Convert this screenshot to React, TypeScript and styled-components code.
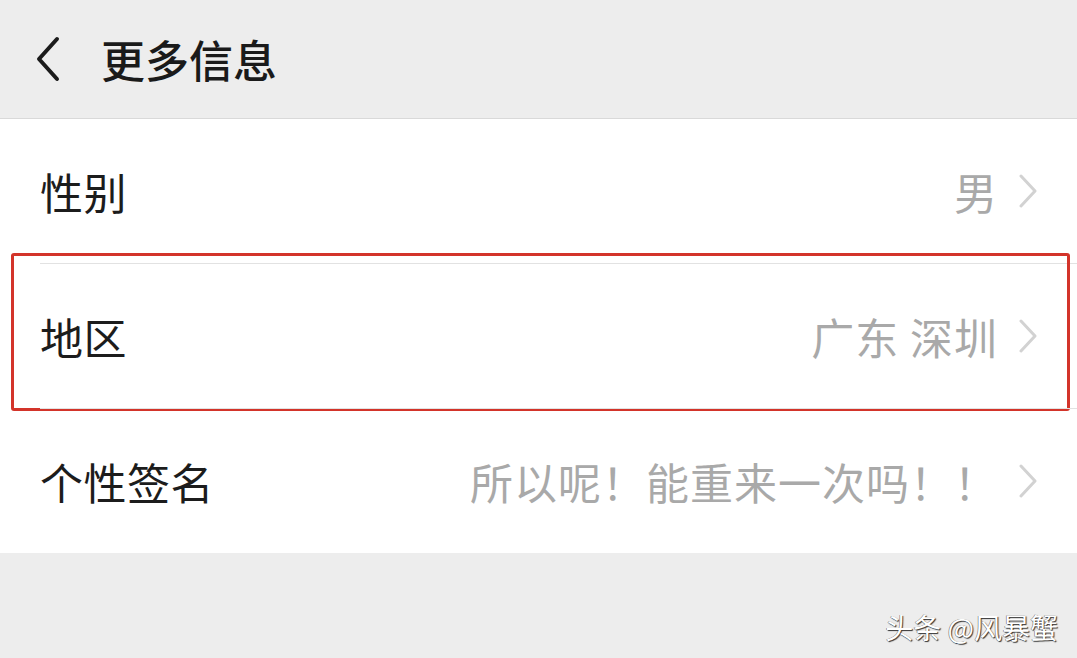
import React from "react";
import styled, { createGlobalStyle } from "styled-components";

interface InfoItem {
    label: string;
    value: string;
    marked?: boolean;
}

const items: InfoItem[] = [
    { label: "性别", value: "男" },
    { label: "地区", value: "广东 深圳", marked: true },
    { label: "个性签名", value: "所以呢！能重来一次吗！！" },
];

const App: React.FC = () => {
    return (
        <>
            <GlobalStyle />
            <Page>
                <Header>
                    <BackButton aria-label="返回">
                        <svg width="26" height="46" viewBox="0 0 26 46">
                            <path
                                d="M22 3 L4 23 L22 43"
                                fill="none"
                                stroke="#1b1b1b"
                                strokeWidth="4"
                                strokeLinecap="round"
                                strokeLinejoin="round"
                            />
                        </svg>
                    </BackButton>
                    <Title>更多信息</Title>
                </Header>
                <List>
                    {items.map((item, i) => (
                        <Row key={item.label}>
                            <RowInner first={i === 0}>
                                <Label>{item.label}</Label>
                                <Value>{item.value}</Value>
                                <Chevron width="18" height="34" viewBox="0 0 18 34">
                                    <path
                                        d="M2 2 L16 17 L2 32"
                                        fill="none"
                                        stroke="#d2d2d2"
                                        strokeWidth="3"
                                        strokeLinecap="round"
                                        strokeLinejoin="round"
                                    />
                                </Chevron>
                            </RowInner>
                            {item.marked && <Marker />}
                        </Row>
                    ))}
                </List>
                <Footer>
                    <Watermark>头条 @风暴蟹</Watermark>
                </Footer>
            </Page>
        </>
    );
};

const GlobalStyle = createGlobalStyle`
    html, body {
        margin: 0;
        padding: 0;
        background: #ededed;
    }
    body {
        font-family: "Noto Sans CJK SC", "Noto Sans", sans-serif;
    }
`;

const Page = styled.div`
    width: 1077px;
    height: 658px;
    overflow: hidden;
    background: #ededed;
    display: flex;
    flex-direction: column;
`;

const Header = styled.div`
    height: 118px;
    flex-shrink: 0;
    display: flex;
    align-items: center;
    padding-left: 35px;
    gap: 40px;
    border-bottom: 1px solid #d9d9d9;
    box-sizing: content-box;
`;

const BackButton = styled.div`
    display: flex;
    align-items: center;
`;

const Title = styled.h1`
    margin: 0;
    font-size: 44px;
    font-weight: 500;
    color: #1a1a1a;
    line-height: 1;
`;

const List = styled.div`
    background: #ffffff;
    display: flex;
    flex-direction: column;
`;

const Row = styled.div`
    position: relative;
    padding-left: 40px;
`;

const RowInner = styled.div<{ first: boolean }>`
    height: 144px;
    display: flex;
    align-items: center;
    padding-right: 40px;
    border-top: ${({ first }) => (first ? "none" : "1px solid #e2e2e2")};
`;

const Label = styled.span`
    font-size: 43px;
    letter-spacing: 0.5px;
    color: #1c1c1c;
    line-height: 1;
`;

const Value = styled.span`
    margin-left: auto;
    font-size: 43px;
    letter-spacing: 1px;
    color: #a9a9a9;
    line-height: 1;
`;

const Chevron = styled.svg`
    margin-left: 21px;
    flex-shrink: 0;
`;

const Marker = styled.div`
    position: absolute;
    top: -10px;
    left: 11px;
    right: 7px;
    bottom: -3px;
    border: 3px solid #d3342a;
    border-radius: 3px;
    pointer-events: none;
`;

const Footer = styled.div`
    flex: 1;
    display: flex;
    align-items: flex-end;
    justify-content: flex-end;
    padding: 0 19px 17px 0;
`;

const Watermark = styled.span`
    font-size: 28px;
    color: #ffffff;
    line-height: 1;
    text-shadow: 1px 1px 1px #333, -0.5px -0.5px 0 #666;
`;

export default App;
